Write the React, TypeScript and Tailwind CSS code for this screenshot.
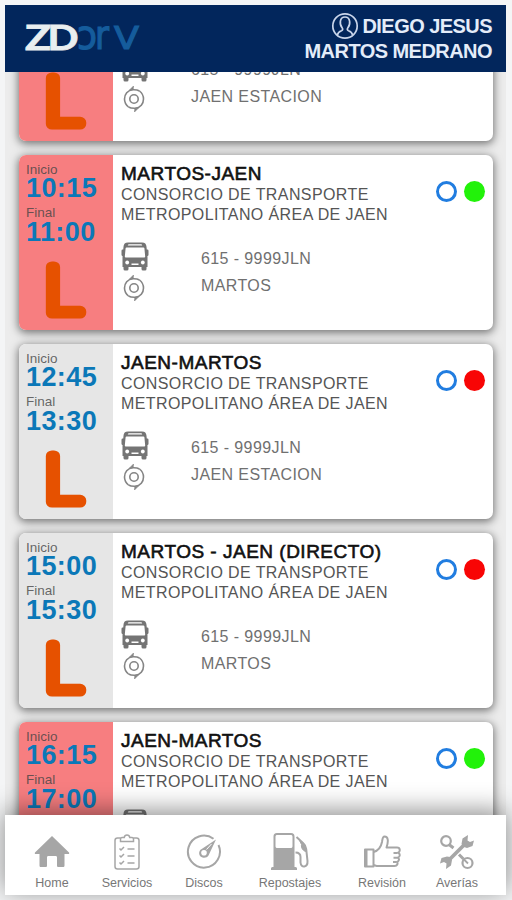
import type { ReactNode } from "react";

type Service = {
    start: string;
    end: string;
    title: string;
    vehicle: string;
    stop: string;
    late: boolean;
    online: boolean;
    wide: boolean;
};

const services: Service[] = [
    { start: "09:15", end: "10:00", title: "JAEN-MARTOS", vehicle: "615 - 9999JLN", stop: "JAEN ESTACION", late: true, online: true, wide: true },
    { start: "10:15", end: "11:00", title: "MARTOS-JAEN", vehicle: "615 - 9999JLN", stop: "MARTOS", late: true, online: true, wide: false },
    { start: "12:45", end: "13:30", title: "JAEN-MARTOS", vehicle: "615 - 9999JLN", stop: "JAEN ESTACION", late: false, online: false, wide: true },
    { start: "15:00", end: "15:30", title: "MARTOS - JAEN (DIRECTO)", vehicle: "615 - 9999JLN", stop: "MARTOS", late: false, online: false, wide: false },
    { start: "16:15", end: "17:00", title: "JAEN-MARTOS", vehicle: "615 - 9999JLN", stop: "JAEN ESTACION", late: true, online: true, wide: true },
];

const Logo = () => (
    <svg width="118" height="32" viewBox="0 0 118 32" className="block overflow-visible">
        <g fill="#155c9c" stroke="#155c9c" strokeWidth="1.2" fontFamily="'DejaVu Sans', sans-serif">
            <text x="52" y="27" fontSize="40" textLength="20" lengthAdjust="spacingAndGlyphs">ɔ</text>
            <text x="70" y="27" fontSize="41" textLength="14" lengthAdjust="spacingAndGlyphs">r</text>
            <text x="89" y="27" fontSize="32" textLength="25" lengthAdjust="spacingAndGlyphs">V</text>
        </g>
        <g fill="#e9eef0" stroke="#e9eef0" strokeWidth="0.8" fontFamily="Lato, sans-serif" fontWeight="700" fontSize="34">
            <text x="0" y="28" textLength="26" lengthAdjust="spacingAndGlyphs">Z</text>
            <text x="22.500" y="28" textLength="31" lengthAdjust="spacingAndGlyphs">D</text>
        </g>
    </svg>
);

const UserIcon = () => (
    <svg width="28" height="28" viewBox="0 0 28 28" fill="none" stroke="#c9d5ea" strokeWidth="1.7">
        <circle cx="14" cy="14" r="12.2" />
        <path d="M6.500 23c.3-2.600 1.500-3.500 4-4.300 1.400-.5 1.500-1.700.6-2.900C8.300 12.500 8.400 5 14 5s5.700 7.500 2.900 10.800c-.9 1.200-.8 2.400.6 2.900 2.500.8 3.700 1.700 4 4.300" />
    </svg>
);

const BusIcon = () => (
    <svg width="28" height="29" viewBox="0 0 28 29" className="block" fill="#747474">
        <rect x="2.500" y="23" width="5" height="5.500" rx="1.500" />
        <rect x="20.500" y="23" width="5" height="5.500" rx="1.500" />
        <rect x=".5" y="7.500" width="3" height="6.500" rx="1.200" />
        <rect x="24.500" y="7.500" width="3" height="6.500" rx="1.200" />
        <path d="M7 .5h14c3 0 4.300 1.500 4.500 4.200L26.500 15v10h-25V15L2.500 4.700C2.700 2 4 .5 7 .5z" />
        <path fill="#fff" d="M7.500 2.300h13l.8 1.200H6.700zM5.500 5.500h17c.5 0 .8.300.9.800l.8 8.200c0 .7-.3 1-.9 1H4.700c-.6 0-.9-.3-.9-1l.8-8.200c.1-.5.4-.8.900-.8zM10.500 21.500h7V23h-7z" />
        <circle cx="6.200" cy="20.500" r="1.900" fill="#fff" />
        <circle cx="21.800" cy="20.500" r="1.900" fill="#fff" />
    </svg>
);

const StopIcon = () => (
    <svg width="22" height="28" viewBox="0 0 22 28" className="block" fill="none" stroke="#858585" strokeWidth="1.600">
        <path d="M10 4.700C4.500 5 1.500 9.500 1.500 14c0 3.500 1.500 6 4 8M12 23.300c5.500-.3 8.500-4.800 8.500-9.300 0-3.500-1.500-6-4-8" />
        <path d="M5.500 22c2 1.200 4 1.400 6.500 1.300M16.500 6c-2-1.200-4-1.400-6.500-1.300" />
        <path fill="#858585" strokeWidth=".6" d="M6.500 5 10.500 1l-.3 3.700zM15.500 23 11.500 27l.3-3.700z" />
        <circle cx="11" cy="14" r="4.200" />
    </svg>
);

const LineBadge = () => (
    <svg width="48" height="62" viewBox="0 0 48 62" className="ml-[17px] mt-4 block overflow-visible">
        <text x="2" y="53.500" fontFamily="Roboto, Lato, sans-serif" fontWeight="100" fontSize="64" textLength="37" lengthAdjust="spacingAndGlyphs" fill="#e65100" stroke="#e65100" strokeWidth="11" strokeLinejoin="round">L</text>
    </svg>
);

const ServiceCard = ({ service }: { service: Service }) => (
    <article className="flex h-[175px] shrink-0 overflow-hidden rounded-[7px] bg-white shadow-[0_2px_8px_1px_rgba(0,0,0,0.5)]">
        <div className={`w-[94px] shrink-0 pl-[7px] pt-[7px] ${service.late ? "bg-[#f77e80]" : "bg-[#e6e6e6]"}`}>
            <p className="h-4 text-[13.5px] leading-4 text-[#444]/80">Inicio</p>
            <p className="h-[27px] text-[27px] font-bold leading-[21px] tracking-[0.4px] text-[#0b78b8]">{service.start}</p>
            <p className="h-4 text-[13.5px] leading-4 text-[#444]/80">Final</p>
            <p className="h-[22px] text-[27px] font-bold leading-[23px] tracking-[0.4px] text-[#0b78b8]">{service.end}</p>
            <LineBadge />
        </div>
        <div className="flex-1 pl-2 pt-2">
            <div className="flex">
                <div className="w-[315px] whitespace-nowrap">
                    <h2 className="text-[19px] leading-[22px] tracking-[0.5px] text-[#111] [-webkit-text-stroke:0.6px_#111]">{service.title}</h2>
                    <p className="text-[16px] leading-[19.500px] tracking-[0.4px] text-[#555]">
                        CONSORCIO DE TRANSPORTE
                        <br />
                        METROPOLITANO ÁREA DE JAEN
                    </p>
                </div>
                <div className="flex gap-[7px] pt-[18px]">
                    <span className="size-[21px] rounded-full border-[3px] border-[#217de0]" />
                    <span className={`size-[21px] rounded-full ${service.online ? "bg-[#22f20a]" : "bg-[#f80505]"}`} />
                </div>
            </div>
            <div className="mt-[18px] flex">
                <div className={`flex flex-col ${service.wide ? "w-[70px]" : "w-20"}`}>
                    <BusIcon />
                    <div className="ml-[2px] mt-[3px]">
                        <StopIcon />
                    </div>
                </div>
                <div className="pt-1 text-[16px] leading-[26.500px] tracking-[0.4px] text-[#707070]">
                    <p>{service.vehicle}</p>
                    <p>{service.stop}</p>
                </div>
            </div>
        </div>
    </article>
);

const HomeIcon = () => (
    <svg width="36" height="36" viewBox="0 0 36 36" fill="#a6a6a6">
        <path d="M18 2 35 18.500c.5.800.2 1.500-.7 1.500h-3.800v11.500c0 1-.6 1.500-1.500 1.500h-4.500c-1 0-1.500-.5-1.500-1.500v-8c0-1-.5-1.500-1.500-1.500h-7c-1 0-1.500.5-1.500 1.500v8c0 1-.5 1.500-1.500 1.500H7c-.9 0-1.500-.5-1.500-1.500V20H1.700C.8 20 .5 19.300 1 18.500z" />
    </svg>
);

const ClipboardIcon = () => (
    <svg width="36" height="36" viewBox="0 0 36 36" fill="none" stroke="#a6a6a6" strokeWidth="1.500">
        <path d="M11.500 4H8.500a2.500 2.500 0 0 0-2.500 2.500v26A2.500 2.500 0 0 0 8.500 35h19a2.500 2.500 0 0 0 2.500-2.500v-26A2.500 2.500 0 0 0 27.500 4h-3" />
        <path d="M11.500 7.500V5c0-1 .5-1.500 1.500-1.500h2.200C15.500 1.800 16.500 1 18 1s2.500.8 2.800 2.500H23c1 0 1.500.5 1.500 1.500v2.500z" />
        <path d="m10.500 14.500 1.500 1.500 3-3M10.500 21.500l1.500 1.500 3-3M10.500 28.500l1.500 1.500 3-3M18.500 15h7M18.500 22h7M18.500 29h7" />
    </svg>
);

const GaugeIcon = () => (
    <svg width="36" height="36" viewBox="0 0 36 36" fill="none" stroke="#a6a6a6" strokeWidth="2">
        <path d="M27.500 4.800A16 16 0 1 0 32.500 11" />
        <path fill="#a6a6a6" stroke="none" d="M30 5.500 22.500 21.500c-1.200 2-3.800 2.700-6 2-3-1-4.200-4.200-2.700-6.800.4-.7.900-1.200 1.500-1.500z" />
        <circle cx="18" cy="18.800" r="2.800" fill="#fff" stroke="none" />
        <path stroke="#fff" strokeWidth="1" d="m20.500 15.500 5-5.500" />
    </svg>
);

const PumpIcon = () => (
    <svg width="40" height="38" viewBox="0 0 40 38" fill="none" stroke="#a6a6a6" strokeWidth="2">
        <path fill="#a6a6a6" stroke="none" fillRule="evenodd" d="M7 0h14c2.500 0 3.500 1.200 3.500 3.500v30.500h1c1 0 1.500.8 1.500 1.700V37H1v-1.300c0-.9.5-1.700 1.500-1.700h1V3.500C3.500 1.200 4.500 0 7 0zm.5 2C6 2 5.500 2.500 5.500 4v9c0 1.500.5 2 2 2h13c1.500 0 2-.5 2-2V4c0-1.500-.5-2-2-2z" />
        <path d="m26.500 4 7 6.500c2 1.700 2.500 3.500 2.700 5.500l1.300 12c.4 6.500-6.500 7.500-7 1.500V24c0-2.500-1-4.500-5-4.500" />
        <path fill="#a6a6a6" strokeWidth="1" d="m29 6.500 4.500 4.500c1.800 2 2.500 4 3 8-3.500-1.500-5.500-3.500-5-7.500z" />
    </svg>
);

const ThumbIcon = () => (
    <svg width="38" height="36" viewBox="0 0 38 36" fill="none" stroke="#a6a6a6" strokeWidth="2" strokeLinejoin="round">
        <path d="M2 15.500h8.500v17H2zM3.500 16v16" />
        <path d="M10.500 18c4-1 7.500-5 8.500-10 .5-3 .5-5.500 2.500-5.500 4 0 4 5 2 11h10.500c3.500 0 3.500 4.500 1 5.300 2.500.8 2.300 4.200-.3 4.800 2 .9 1.600 3.800-.8 4.300 1.300 1.400.5 4.100-2.400 4.100H15c-2 0-3-.8-4.500-1" />
        <path d="M30.500 19h4M30.500 23.700h4M30 28h3.500" />
    </svg>
);

const ToolsIcon = () => (
    <svg width="36" height="36" viewBox="0 0 36 36" fill="none" stroke="#a6a6a6">
        <path strokeWidth="3.800" d="m8 28 20-20" />
        <path fill="#a6a6a6" stroke="none" d="m22.500 10 1-5.500L29 1l-.5 5.500 2.500 1.500L35 6.500 33.500 12 28 14l-3-1zM13 26l-1 5.500L7 35l.5-5.500L5 28l-4 1.500L2.500 24 8 22.500l3 .5z" />
        <circle cx="7" cy="7" r="4.800" strokeWidth="2.200" />
        <path strokeWidth="3" d="m10 10.500 4.500 3.500M20 20.500l4.500 4.500" />
        <circle cx="28.500" cy="29" r="5" strokeWidth="2.200" />
        <path strokeWidth="1.800" d="m25 25.500 4 4" />
    </svg>
);

const navItems: { label: string; width: string; icon: ReactNode }[] = [
    { label: "Home", width: "w-[75px]", icon: <HomeIcon /> },
    { label: "Servicios", width: "w-[75px]", icon: <ClipboardIcon /> },
    { label: "Discos", width: "w-[79px]", icon: <GaugeIcon /> },
    { label: "Repostajes", width: "w-[93px]", icon: <PumpIcon /> },
    { label: "Revisión", width: "w-[91px]", icon: <ThumbIcon /> },
    { label: "Averías", width: "w-[59px]", icon: <ToolsIcon /> },
];

export default function App() {
    return (
        <div className="h-[900px] w-[512px] overflow-hidden bg-[#f4f5f6] pl-[5px] pt-[5px] font-['Liberation_Sans',Arial,sans-serif]">
            <div className="flex h-[890px] w-[501px] flex-col">
                {/* HEADER */}
                <header className="z-10 flex h-[67px] shrink-0 items-start justify-between bg-[#02265c] pl-5 pr-[14px]">
                    <div className="pt-[17px]">
                        <Logo />
                    </div>
                    <div className="pt-2 text-right text-[20px] font-bold leading-6 tracking-[-0.55px] text-[#e4ecf9]">
                        <div className="flex h-[26px] items-center justify-end gap-[3px]">
                            <UserIcon />
                            <span>DIEGO JESUS</span>
                        </div>
                        <div>MARTOS MEDRANO</div>
                    </div>
                </header>

                {/* SERVICES */}
                <main className="h-[743px] shrink-0 overflow-hidden bg-[#ececec] pl-[14px] pr-[13px]">
                    <div className="-mt-[106px] flex flex-col gap-[14px]">
                        {services.map((service) => (
                            <ServiceCard key={service.start} service={service} />
                        ))}
                    </div>
                </main>

                {/* BOTTOM NAV */}
                <nav className="z-10 flex h-20 shrink-0 bg-white pl-[9.5px] shadow-[0_-4px_24px_rgba(0,0,0,0.45)]">
                    {navItems.map((item) => (
                        <div key={item.label} className={`flex shrink-0 flex-col items-center pt-[18px] ${item.width}`}>
                            <div className="flex h-[38px] items-center">{item.icon}</div>
                            <span className="mt-1 text-[12.5px] leading-4 text-[#777]">{item.label}</span>
                        </div>
                    ))}
                </nav>
            </div>
        </div>
    );
}
